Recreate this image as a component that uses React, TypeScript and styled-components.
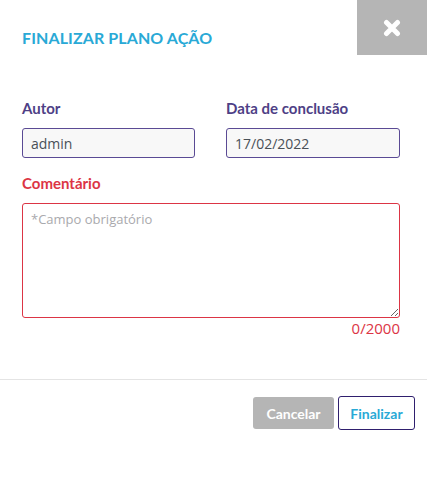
import React from "react";
import styled, { createGlobalStyle } from "styled-components";

const Global = createGlobalStyle`
  html, body { margin: 0; padding: 0; background: #ffffff; }
  * { box-sizing: border-box; }
`;

const Modal = styled.div`
  width: 427px;
  height: 502px;
  background: #fff;
  display: flex;
  flex-direction: column;
  font-family: "Lato", "Open Sans", sans-serif;
`;

const Header = styled.div`
  display: flex;
  justify-content: space-between;
  align-items: flex-start;
  height: 98px;
`;

const Title = styled.h1`
  margin: 28px 0 0 22px;
  font-size: 16px;
  line-height: 20px;
  font-weight: 700;
  color: #29a9d6;
  letter-spacing: 0.1px;
`;

const CloseButton = styled.button`
  width: 70px;
  height: 55px;
  border: none;
  background: #b5b5b5;
  display: flex;
  align-items: center;
  justify-content: center;
  padding: 0;
  cursor: pointer;
`;

const Body = styled.div`
  padding: 0 27px 0 22px;
  display: flex;
  flex-direction: column;
`;

const Row = styled.div`
  display: grid;
  grid-template-columns: 173px 174px;
  column-gap: 31px;
`;

const Field = styled.div`
  display: flex;
  flex-direction: column;
`;

const Label = styled.label<{ $error?: boolean }>`
  font-size: 15px;
  line-height: 20px;
  font-weight: 700;
  color: ${(p) => (p.$error ? "#dc3545" : "#4e3f86")};
  margin-bottom: 10px;
`;

const Input = styled.div`
  height: 30px;
  border: 1px solid #5a4a94;
  border-radius: 3px;
  background: #f8f8f8;
  padding: 0 8px;
  display: flex;
  align-items: center;
  font-family: "Open Sans", sans-serif;
  font-size: 14px;
  color: #495057;
`;

const CommentField = styled(Field)`
  margin-top: 15px;
`;

const TextArea = styled.textarea`
  height: 115px;
  width: 100%;
  border: 1px solid #dc3545;
  border-radius: 3px;
  background: #fff;
  padding: 5px 8px;
  font-family: "Open Sans", sans-serif;
  font-size: 13px;
  line-height: 20px;
  color: #495057;
  resize: vertical;
  display: block;
  &::placeholder {
    color: #a9a9ad;
  }
`;

const Counter = styled.div`
  text-align: right;
  font-family: "Open Sans", sans-serif;
  font-size: 15px;
  line-height: 20px;
  color: #dc3545;
`;

const Footer = styled.div`
  margin-top: 41px;
  border-top: 1px solid #e4e4e4;
  padding: 16px 12px 0 0;
  display: flex;
  justify-content: flex-end;
  align-items: center;
  gap: 4px;
`;

const Button = styled.button<{ $variant: "cancel" | "primary" }>`
  font-family: "Lato", "Open Sans", sans-serif;
  font-weight: 700;
  font-size: 14px;
  border-radius: 3px;
  cursor: pointer;
  padding: 0;
  ${(p) =>
    p.$variant === "cancel"
      ? `
    width: 81px;
    height: 32px;
    background: #b5b5b5;
    border: none;
    color: #ffffff;
  `
      : `
    width: 77px;
    height: 34px;
    background: #ffffff;
    border: 1px solid #2f1f6e;
    color: #29a9d6;
  `}
`;

export default function App() {
  return (
    <>
      <Global />
      <Modal>
        <Header>
          <Title>FINALIZAR PLANO AÇÃO</Title>
          <CloseButton aria-label="Fechar">
            <svg width="18" height="18" viewBox="0 0 18 18">
              <path
                d="M3.5 3.5 L14.5 14.5 M14.5 3.5 L3.5 14.5"
                stroke="#ffffff"
                strokeWidth="5"
                strokeLinecap="round"
              />
            </svg>
          </CloseButton>
        </Header>
        <Body>
          <Row>
            <Field>
              <Label>Autor</Label>
              <Input>admin</Input>
            </Field>
            <Field>
              <Label>Data de conclusão</Label>
              <Input>17/02/2022</Input>
            </Field>
          </Row>
          <CommentField>
            <Label $error>Comentário</Label>
            <TextArea placeholder="*Campo obrigatório" />
            <Counter>0/2000</Counter>
          </CommentField>
        </Body>
        <Footer>
          <Button $variant="cancel">Cancelar</Button>
          <Button $variant="primary">Finalizar</Button>
        </Footer>
      </Modal>
    </>
  );
}
